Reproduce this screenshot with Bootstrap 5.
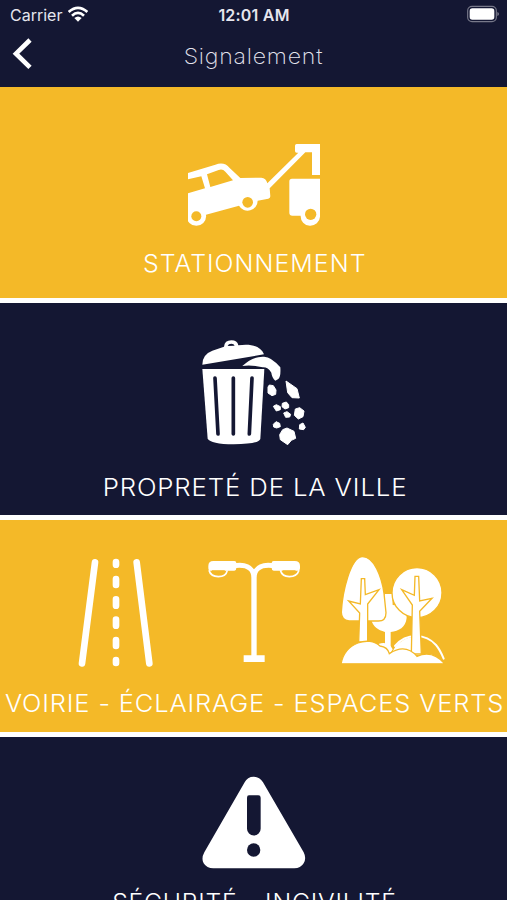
<!DOCTYPE html>
<html lang="fr">
<head>
<meta charset="utf-8">
<meta name="viewport" content="width=device-width, initial-scale=1">
<title>Signalement</title>
<link href="https://cdn.jsdelivr.net/npm/bootstrap@5.3.0/dist/css/bootstrap.min.css" rel="stylesheet">
<style>
:root{--navy:#141733;--gold:#f4b928}
body{font-family:Inter,"Liberation Sans",sans-serif;background:var(--navy);color:#fff}
svg{display:block;flex:none}
.screen{height:900px}
.status{height:30px;font-size:16px;line-height:30px;color:#e6e6ee}
.status .carrier{padding-left:10px}
.status .clock{font-weight:600;font-size:16px;letter-spacing:.2px;padding-right:1px}
.title-bar{height:57px}
.title-bar h1{font-size:22px;font-weight:200;line-height:30px;color:#e4e4ee;letter-spacing:.75px;margin:11px 0 0;transform:scaleX(1.05)}
.back{margin:8px 0 0 12px}
.spacer{width:32px}
.tile{height:217px;border-bottom:5px solid #fff;flex:none;color:#fff}
.gold{background:var(--gold);--hole:var(--gold)}
.navy{background:var(--navy);--hole:var(--navy)}
.first{height:216px}
.label{font-size:24px;font-weight:300;line-height:30px;white-space:nowrap;letter-spacing:.8px;padding-left:2px;transform:scaleX(var(--stretch))}
.stationnement{margin-top:23px;letter-spacing:1px;--stretch:1.038}
.proprete{margin-top:28px;--stretch:1.073}
.voirie{margin-top:21px;--stretch:1.062}
.securite{margin-top:18px;--stretch:1.028}
.hole{fill:var(--hole)}
.cut{stroke:var(--hole)}
</style>
</head>
<body>
<div class="screen d-flex flex-column overflow-hidden">
  <header class="navy flex-shrink-0">
    <div class="status row g-0">
      <div class="col d-flex carrier">Carrier
        <svg style="margin:6px 0 0 6px" width="20" height="16" viewBox="0 0 60 48" fill="none" stroke="#fff" stroke-width="8"><path d="M2 18Q30-7 58 18M12 29Q30 12 48 29"/><path d="M19 36Q30 27 41 36L30 47z" fill="#fff" stroke="none"/></svg>
      </div>
      <div class="col-auto clock">12:01 AM</div>
      <div class="col d-flex justify-content-end pe-2">
        <svg style="margin-top:5px" width="33" height="18" viewBox="0 0 99 54"><rect x="5" y="4" width="86" height="46" rx="13" fill="none" stroke="#777889" stroke-width="3.500"/><rect x="11" y="10" width="74" height="34" rx="8" fill="#fff"/><path d="M94 21q5 1 5 6t-5 6z" fill="#777889"/></svg>
      </div>
    </div>
    <div class="title-bar d-flex justify-content-between align-items-start">
      <svg class="back" width="20" height="31" viewBox="0 0 60 93" fill="none" stroke="#fff" stroke-width="14"><path d="M54 6L12 47l42 41"/></svg>
      <h1>Signalement</h1>
      <div class="spacer"></div>
    </div>
  </header>

  <section class="tile first gold d-flex flex-column align-items-center">
    <svg style="margin-top:57px" width="132" height="82" viewBox="24 27 396 246" fill="#fff">
      <path fill-rule="evenodd" d="M24 114L106 89Q133 79 149 99L181 129L244 128Q258 129 262 145L355 53H350Q345 53 345 48V32Q345 27 350 27H420V120H396V52H376L269 160L271 184Q271 190 265 191L233 197A30 30 0 0 1 177 212L78 239L24 250V175L75 160L64 124L24 133zM81 118L91 156L159 136L136 110Q128 101 116 105z"/>
      <circle cx="49" cy="243" r="29.500"/>
      <circle class="hole" cx="49" cy="244" r="15"/><circle class="hole" cx="203" cy="202" r="16"/>
      <path d="M336 131H420V245A29 29 0 0 1 362 242H337Q328 242 328 233V139Q328 131 336 131z"/>
      <circle class="hole" cx="392" cy="238" r="17"/>
    </svg>
    <div class="label stationnement">STATIONNEMENT</div>
  </section>

  <section class="tile navy d-flex flex-column align-items-center">
    <svg style="margin-top:37px" width="104" height="105" viewBox="36 30 312 315" fill="#fff">
      <path d="M37 104Q37 73 67 62L102 50Q104 31 124 31Q142 31 145 46C180 40 212 47 222 73z"/>
      <path class="hole" d="M113 48Q115 41 124 41Q132 41 134 47z"/>
      <path d="M37 117H223L211 327Q207 342 131 343Q62 342 53 326z"/>
      <g class="cut" fill="none" stroke-width="11" stroke-linecap="round"><path d="M75 144L84 312M130 144V312M186 144L178 312"/></g>
      <path d="M157 108Q188 79 220 80Q242 78 271 112Q273 140 265 147L256 152Q246 144 244 128Q234 111 218 112Q182 103 157 108z"/>
      <path stroke="#fff" stroke-width="3" stroke-linejoin="round" d="M238 165L250 167L258 180L257 193L246 197L234 189V171zM288 153L321 176L328 204L306 203L293 188zM250 229L259 224L271 230V239L259 243zM277 220L289 216L296 224V233L285 237L276 230zM281 249L291 245L302 253L299 261L287 262zM316 237L329 233L342 243L339 260L325 267L313 256zM250 283L258 275L269 280L271 290L260 294L251 291zM329 284L339 279L346 292L341 299L328 297zM278 299L291 294L312 304L317 325L304 331L293 344L271 329L269 314z"/>
    </svg>
    <div class="label proprete">PROPRETÉ DE LA VILLE</div>
  </section>

  <section class="tile gold d-flex flex-column">
    <div class="d-flex" style="margin:36px 0 0 78px">
      <svg width="76" height="112" viewBox="24 18 228 336" fill="none" stroke="#fff" stroke-width="20" stroke-linecap="round"><path d="M75 37L36 340M200 37L238 340M138 36v8M138 87v18M138 148v19M138 209v18M138 270v18M138 330v9"/></svg>
      <svg style="margin-left:54px" width="92" height="112" viewBox="24 18 276 336" fill="#fff">
        <path d="M25 48Q25 33 40 33H103Q109 33 109 39Q147 35 162 58Q177 35 215 39Q215 33 221 33H284Q300 33 300 48V54Q300 62 293 62H221Q215 62 215 54Q170 50 170 83V316H194V336H131V316H154V83Q154 50 109 54Q109 62 103 62H32Q25 62 25 54z"/>
        <path class="hole" d="M35 61H75Q70 76 55 76Q39 76 35 61zM247 61H287Q283 76 268 76Q252 76 247 61z"/>
        <path d="M27 61Q32 80 55 80Q78 80 82 61M241 61Q246 80 268 80Q291 80 297 61" fill="none" stroke="#fff" stroke-width="5"/>
      </svg>
      <svg style="margin-left:41px" width="105" height="112" viewBox="33 18 315 336" fill="#fff">
        <path d="M165 132H186L188 165C212 165 230 180 230 203C227 233 207 242 182 246V293H165V246C143 240 130 231 124 211z"/>
        <path class="cut" stroke-width="4" d="M98 20C132 20 155 80 162 130L168 188Q168 213 145 213H57Q34 210 34 187C37 128 61 20 98 20z"/>
        <circle class="cut" stroke-width="4" cx="261" cy="128" r="75"/>
        <path d="M195 288C230 247 288 251 318 285Q330 299 341 326" fill="none" stroke="#fff" stroke-width="6" stroke-linecap="round"/>
        <path d="M145 282Q175 271 188 298L175 320zM195 292Q230 251 272 263V315H182z"/>
        <g class="cut" stroke-width="4" stroke-linejoin="miter"><path d="M94 86H104L106 134L147 119L113 162V276H86L89 189L56 153L91 162zM255 79H266L269 153L306 145L269 184L274 312H244L247 165L215 119L253 136z"/></g>
        <path class="cut" stroke-width="4" d="M33 342C45 277 117 257 150 288Q173 291 178 311Q226 279 261 319Q307 298 345 342z"/>
        <path class="hole" d="M33 341h315v10H33z"/>
      </svg>
    </div>
    <div class="label voirie text-center">VOIRIE - ÉCLAIRAGE - ESPACES VERTS</div>
  </section>

  <section class="tile navy d-flex flex-column align-items-center">
    <svg style="margin-top:39px" width="104" height="94" viewBox="304 33 312 282" fill="#fff">
      <path d="M432 52Q440 35 459 35Q477 35 487 52L609 262Q618 280 609 295Q600 310 581 310H338Q318 310 309 295Q301 280 311 262z"/>
      <path class="hole" d="M445 91H473Q480 91 480 98V191A20.500 20.500 0 0 1 439 191V98Q439 91 445 91z"/><circle class="hole" cx="459" cy="255" r="20"/>
    </svg>
    <div class="label securite">SÉCURITÉ - INCIVILITÉ</div>
  </section>
</div>
<script src="https://cdn.jsdelivr.net/npm/bootstrap@5.3.0/dist/js/bootstrap.bundle.min.js"></script>
</body>
</html>
